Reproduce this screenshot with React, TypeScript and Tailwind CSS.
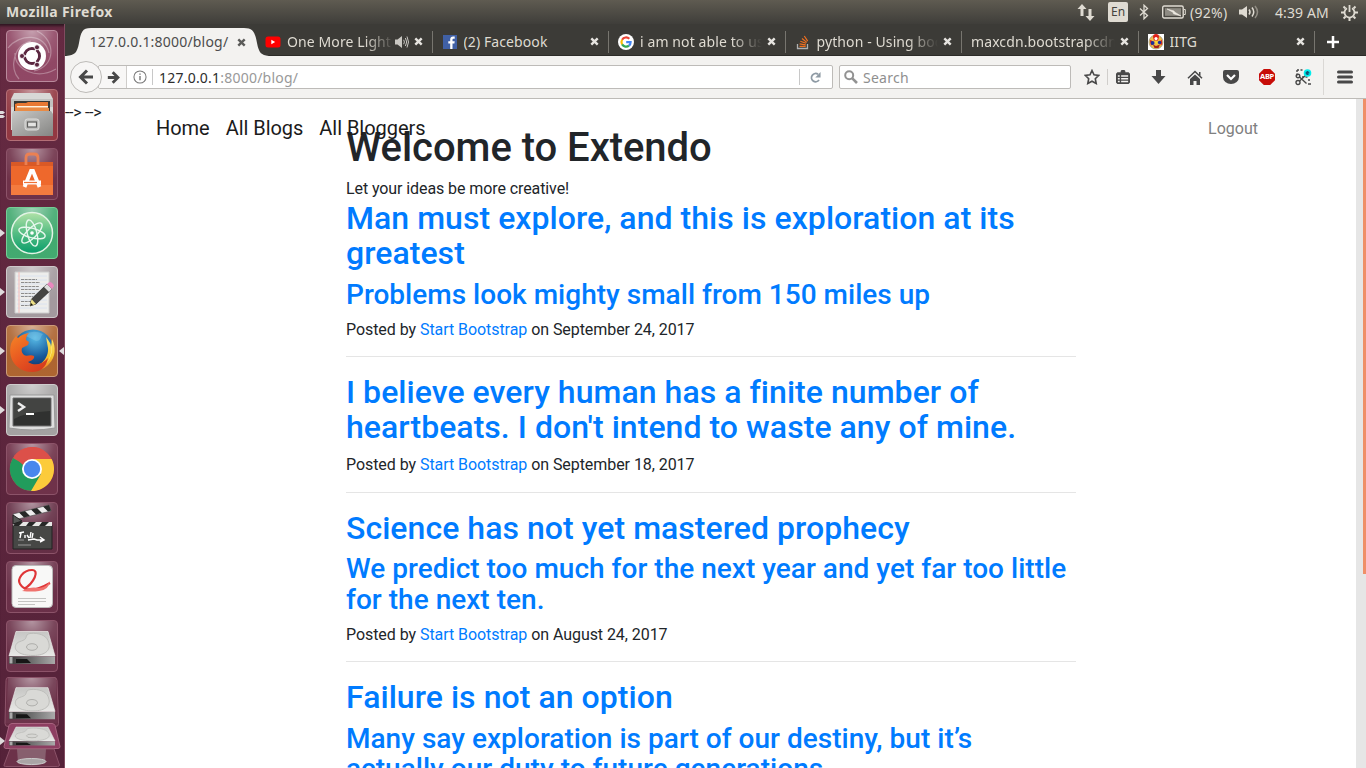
import React from "react";

const ui = "font-['Noto_Sans',sans-serif]";

function Close({ dark = false }: { dark?: boolean }) {
  return (
    <svg className="h-[9px] w-[9px] shrink-0" viewBox="0 0 9 9">
      <path d="M1.3 1.3 7.7 7.7M7.7 1.3 1.3 7.7" stroke={dark ? "#5b5b59" : "#e6e4e0"} strokeWidth="2.4" />
    </svg>
  );
}

function YouTube() {
  return (
    <svg className="h-4 w-4" viewBox="0 0 16 16">
      <rect x="0.5" y="2.5" width="15" height="11" rx="2.5" fill="#f00" />
      <path d="M6.3 5.8v4.4L10.2 8z" fill="#fff" />
    </svg>
  );
}
function Facebook() {
  return (
    <svg className="h-4 w-4" viewBox="0 0 16 16">
      <rect x="1" y="1" width="14" height="14" fill="#4060a5" />
      <path d="M8.2 15V9.4H6.3V7.2h1.9V5.6c0-2 1.1-3 2.9-3h1.6v2.1h-1.1c-.9 0-1.1.4-1.1 1.1v1.4h2.2l-.3 2.2h-1.9V15z" fill="#fff" />
    </svg>
  );
}
function Google() {
  return (
    <svg className="h-4 w-4" viewBox="0 0 16 16">
      <circle cx="8" cy="8" r="8" fill="#fff" />
      <g fill="none" strokeWidth="2.2">
        <path d="M4.1 5.7A4.6 4.6 0 0 1 11.3 4.8" stroke="#ea4335" />
        <path d="M4.1 5.7a4.6 4.6 0 0 0 0 4.7" stroke="#fbbc05" />
        <path d="M4.1 10.4a4.6 4.6 0 0 0 6.9 1.2" stroke="#34a853" />
        <path d="M11 11.6A4.6 4.6 0 0 0 12.6 8.2H8.2" stroke="#4285f4" />
      </g>
    </svg>
  );
}
function Stack() {
  return (
    <svg className="h-4 w-4" viewBox="0 0 16 16" fill="none">
      <path d="M2.5 10v4.5h10V10" stroke="#b0b0b0" strokeWidth="1.3" />
      <path d="M4.5 12.3h6.2M4.6 9.9l6.1.9M5.3 7.2l5.8 2M7 4.5l4.8 3.9M9.3 2l3.4 5.1" stroke="#ef7020" strokeWidth="1.2" />
    </svg>
  );
}
function Iitg() {
  return (
    <svg className="h-4 w-4" viewBox="0 0 16 16">
      <path d="M0 0h16v16H0z" fill="#fff" />
      <circle cx="8" cy="8" r="7" fill="#f0bd4a" stroke="#9b9582" strokeWidth=".8" />
      <path d="M5 3a3 3 0 0 1 6 0L10 6.500H6z" fill="#e02018" />
      <circle cx="8" cy="4.6" r="1.6" fill="#fff" />
      <path d="M1.800 6.500c2-1 3 1 2.6 4L3 11.5z" fill="#d82020" />
      <path d="M13.800 5.5c-2 1-2 4-1 6l1.5-1.5z" fill="#e02818" />
      <path d="M5 10.5 8 12l4-1.5-1.5 3.500h-4z" fill="#a62018" />
      <circle cx="4.6" cy="9" r="1.9" fill="#1c2e9b" />
      <circle cx="11.6" cy="8.500" r="1.8" fill="#1c2e9b" />
      <path d="M7 6.5 9.5 8 8 10.5z" fill="#ffdf27" />
    </svg>
  );
}

function Speaker() {
  return (
    <svg className="h-[14px] w-[14px]" viewBox="0 0 14 14" fill="none" stroke="#c9c7c2">
      <path d="M0 4.5h2.5L7 1v12L2.5 9.5H0z" fill="#c9c7c2" stroke="none" />
      <path d="M8.7 4.8q1.4 2.2 0 4.4M10.4 3q2.6 4 0 8M12 1.5q3 5.5 0 11" />
    </svg>
  );
}

type TabProps = { icon?: React.ReactNode; label: string; fade?: boolean; audio?: boolean };
function Tab({ icon, label, fade, audio }: TabProps) {
  return (
    <div className="flex h-full w-[176.5px] shrink-0 items-center pt-[4px] pl-[9px]">
      {icon && <span className="mr-[6px] h-4 w-4 shrink-0">{icon}</span>}
      <span
        className={`min-w-0 flex-1 overflow-hidden text-[14px] leading-5 tracking-[0.1px] whitespace-nowrap text-[#dfdbd2] ${
          fade ? "[mask-image:linear-gradient(to_right,#000_calc(100%_-_30px),transparent)]" : ""
        }`}
      >
        {label}
      </span>
      {audio && <Speaker />}
      <span className="mr-[9px] ml-[5px] flex"><Close /></span>
      <span className="h-[22px] w-px bg-[#77756f]" />
    </div>
  );
}

function TopBar() {
  return (
    <header className="flex h-6 shrink-0 items-center bg-linear-to-b from-[#5f5b51] to-[#3f3e3a] pr-[8px] pl-[6px] text-[#dfdbd2]">
      <span className="flex-1 text-[14px] leading-6 font-bold tracking-[0.35px]">Mozilla Firefox</span>
      <svg className="mr-[13px] h-[18px] w-[18px]" viewBox="0 0 18 18" fill="#dfdbd2">
        <path d="M5 1 .5 6H3.500v7h3V6H9.500zM13 18l4.500-5H14.500V6h-3v7H8.500z" />
      </svg>
      <span className="mr-[11px] flex h-5 w-5 items-center justify-center rounded-[2px] bg-[#dfdbd2] text-[12px] text-[#45433e]">En</span>
      <svg className="mr-[13px] h-4 w-[10px]" viewBox="0 0 10 16" fill="none" stroke="#dfdbd2" strokeWidth="1.3">
        <path d="m1 4.500 7.500 7L5 14.800V1.200L8.500 4.500l-7.500 7" />
      </svg>
      <svg className="mr-[4px] h-[14px] w-6" viewBox="0 0 24 14" fill="none" stroke="#dfdbd2">
        <rect x=".7" y="1" width="20.500" height="12" rx="1.500" strokeWidth="1.400" />
        <path d="M22 4.500h1.300v5H22" />
        <path d="M3 3.200h16v7.600H3z" fill="#8e8b83" stroke="none" />
        <path d="m5 4 7 2 .5 1L19 11l-7.500-2.200-.5-1.600z" fill="#eeeae2" stroke="#eeeae2" strokeWidth=".6" />
      </svg>
      <span className="mr-[10px] w-[39px] text-[14px] tracking-[0.3px] whitespace-nowrap">(92%)</span>
      <svg className="mr-[16px] h-4 w-5" viewBox="0 0 20 16" fill="none" stroke="#dfdbd2" strokeWidth="1.500">
        <path d="M0 5.500h3L8 2v12L3 10.500H0z" fill="#dfdbd2" stroke="none" />
        <path d="M10 5.500q2 2.500 0 5M13 3.500q3.500 4.500 0 9" />
        <path d="M16 2q5 6 0 12" stroke="#918d84" />
      </svg>
      <span className="mr-[11px] w-[55px] text-[14px] tracking-[0.1px] whitespace-nowrap">4:39 AM</span>
      <svg className="h-[17px] w-[17px]" viewBox="0 0 17 17" fill="none" stroke="#dfdbd2">
        <path d="M6 4.200a5 5 0 1 0 5 0" strokeWidth="1.800" />
        <path d="M8.500 1v7" strokeWidth="1.800" />
        <path d="m4.500 4.500-2-2M12.500 4.500l2-2M3 8.500H0M14 8.500h3M4.600 12.500l-2 2M12.400 12.500l2 2M8.500 14v3" strokeWidth="2" />
      </svg>
    </header>
  );
}

function Tile({ fill, edge, children }: { fill: string; edge?: string; children: React.ReactNode }) {
  return (
    <svg className="h-[52px] w-[52px] shrink-0" viewBox="0 0 52 52">
      <rect x=".5" y=".5" width="51" height="51" rx="3.500" fill={fill} stroke={edge ?? "#8c5369"} />
      <rect x="1" y="1" width="50" height="50" rx="3" fill="url(#gloss)" />
      {children}
    </svg>
  );
}

function Disk() {
  return (
    <g>
      <path d="M10 11.500h32L49 36H3z" fill="url(#plate)" stroke="#ececea" strokeWidth=".7" />
      <path d="M3 36.500h46v7.500H3z" fill="url(#slot)" />
      <path d="M3.500 37v6.500h3V37z" fill="#aaa" />
      <path d="M10 39h11l4 4H10z" fill="#161616" />
      <path d="M24 13.500c9-1 16 2 18 7 4 9-2 15-15 15-13 0-20-5-17-11 2-4 9-3 10-7 .5-2 1-3.500 4-4z" fill="#d9d9d6" stroke="#bdbdba" />
      <ellipse cx="26" cy="27" rx="5.500" ry="3.300" fill="#d6d6d3" stroke="#aeaeab" />
    </g>
  );
}

function Launcher() {
  return (
    <aside className="relative flex w-[65px] shrink-0 flex-col items-center gap-[7px] overflow-hidden border-r border-[#814b60] bg-linear-to-b from-[#662a42] to-[#552239] pt-[6px] pr-px shadow-[inset_0_4px_3px_-2px_#2d1620]">
      <svg className="absolute h-0 w-0">
        <defs>
          <radialGradient id="gloss" cx=".5" cy="0" r=".75">
            <stop stopColor="#fff" stopOpacity=".5" /><stop offset=".6" stopColor="#fff" stopOpacity=".12" /><stop offset="1" stopColor="#fff" stopOpacity=".03" />
          </radialGradient>
          <linearGradient id="slot"><stop stopColor="#3a3a3a" /><stop offset=".5" stopColor="#6e6e6e" /><stop offset="1" stopColor="#aaa" /></linearGradient>
          <linearGradient id="plate" x1="0" y1="0" x2="0" y2="1"><stop stopColor="#c6c6c4" /><stop offset="1" stopColor="#e8e8e6" /></linearGradient>
          <linearGradient id="steel" x1="0" y1="0" x2="1" y2="1"><stop stopColor="#c8c8c6" /><stop offset="1" stopColor="#858583" /></linearGradient>
          <radialGradient id="sea" cx=".55" cy=".2" r=".8"><stop stopColor="#58bce8" /><stop offset=".6" stopColor="#17599b" /><stop offset="1" stopColor="#102c61" /></radialGradient>
          <linearGradient id="fox" x1="0" y1="0" x2=".7" y2="1"><stop stopColor="#f58727" /><stop offset=".6" stopColor="#e75420" /><stop offset="1" stopColor="#d43c1f" /></linearGradient>
          <linearGradient id="flame" x1="0" y1="0" x2="0" y2="1"><stop stopColor="#fbe36a" /><stop offset=".6" stopColor="#f7c62f" /><stop offset="1" stopColor="#ee7a25" /></linearGradient>
          <linearGradient id="atom" x1="0" y1="0" x2="0" y2="1"><stop stopColor="#b1e2a8" /><stop offset=".5" stopColor="#55bd83" /><stop offset="1" stopColor="#089d6a" /></linearGradient>
        </defs>
      </svg>
      <Tile fill="#8d4260" edge="#b98a9c">
        <g fill="none" stroke="#fff" strokeOpacity=".3" strokeWidth="1.200">
          <path d="M2 18C14 3 39 3 43 23M31 1c20 10 18 36-3 40M50 39C31 50 8 40 9 23M13 49C3 39 7 15 25 11" />
        </g>
        <circle cx="26" cy="26" r="14" fill="#fff" />
        <circle cx="26" cy="26" r="7.500" fill="none" stroke="#5b2740" strokeWidth="3" />
        <path d="M26 26 30.800 34.300M26 26 30.800 17.700M26 26H16.500" stroke="#fff" strokeWidth="1.300" />
        <circle cx="26" cy="26" r="5.900" fill="#fff" />
        <g fill="#5b2740" stroke="#fff" strokeWidth=".8"><circle cx="16" cy="26" r="2.500" /><circle cx="31" cy="17.300" r="2.500" /><circle cx="31" cy="34.700" r="2.500" /></g>
      </Tile>
      <Tile fill="#8f323c" edge="#b46f77">
        <path d="M8 4h36l3 6v31H5V10z" fill="#d8d8d6" />
        <path d="M5 10h42v8H5z" fill="#c2c2c0" />
        <path d="M8 12h36v13H8z" fill="#393836" />
        <path d="M9 15l3-1h8l2-1h20v11H9z" fill="#e97833" />
        <path d="M11 17h31v1.500H11z" fill="#fff3df" />
        <path d="M10 19h33v4H10z" fill="#e98b45" />
        <path d="M7 22h38l2 3v22H6V25z" fill="url(#steel)" />
        <rect x="19" y="30" width="14" height="11" rx="2.500" fill="#bfbfbd" stroke="#dededc" />
        <rect x="21.500" y="33" width="9" height="5" fill="#e4e4e2" stroke="#60605e" strokeWidth="1.200" />
      </Tile>
      <Tile fill="#6b2c44">
        <path d="M5 14h42v33H5z" fill="#ee682c" /><path d="M5 14h42v4H5z" fill="#d95926" /><path d="M5 37h42v10H5z" fill="#f47b3f" />
        <path d="M20 17v-7q0-4 4-4h4q4 0 4 4v7" fill="none" stroke="#eb8052" strokeWidth="2.800" />
        <path d="m18.500 39 6.500-16h2L33.500 39M17 34.500h18" fill="none" stroke="#fff" strokeWidth="3.800" />
        <path d="M18 34.500h13" stroke="#f07135" strokeWidth="1.200" />
      </Tile>
      <Tile fill="#3da76c" edge="#76cd96">
        <circle cx="26" cy="26" r="20.500" fill="url(#atom)" stroke="#e2f4e5" strokeWidth="1.500" />
        <g fill="none" stroke="#e6f7ed" strokeWidth="1.400"><ellipse cx="26" cy="26" rx="13.500" ry="4.800" transform="rotate(15 26 26)" /><ellipse cx="26" cy="26" rx="13.500" ry="4.800" transform="rotate(75 26 26)" /><ellipse cx="26" cy="26" rx="13.500" ry="4.800" transform="rotate(-45 26 26)" /></g>
        <circle cx="26" cy="26" r="1.800" fill="#fff" />
      </Tile>
      <Tile fill="#a0979b" edge="#cec8ca">
        <path d="M9 6h34v41H9z" fill="#ededeb" stroke="#ccc" />
        <path d="M11 10h30M11 14h30M11 18h30M11 22h30M11 26h30M11 30h30M11 34h30M11 38h30M11 42h30" stroke="#d5dff0" strokeWidth=".8" />
        <path d="M13 6v41" stroke="#f5bbb8" /><path d="M15 13.500h16M15 16.500h19M15 20.500h18M15 23.500h18M15 27.500h14M15 30.500h12M15 35.500h10M15 39.500h8" stroke="#8c8c8c" strokeDasharray="3 .7" />
        <path d="m24 40 1.500-7L41 18l5 5-16 15z" fill="#444442" stroke="#222" strokeWidth=".7" /><path d="m24 40 1.500-7 4.500 5z" fill="#eee187" /><path d="m24 40 1-3 2 2z" fill="#111" /><path d="m38 21 3-3 5 5-3 3z" fill="#ddd" /><path d="m41 18 2.500-2q3 0 4.500 4l-2 3z" fill="#e988be" />
      </Tile>
      <Tile fill="#ab602b" edge="#cc9c7b">
        <circle cx="27" cy="25" r="20.500" fill="url(#sea)" />
        <path d="M18 10q9-6 19-1c-3 2-1 7-7 7l-6-3z" fill="#88cbe8" opacity=".4" />
        <path d="M40 12c2 3 5 6 5 10l1-8c4 8 4 18-3 25-6 7-16 8-24 4 14 1 24-9 23-20z" fill="url(#flame)" />
        <path d="M5 19c1-3 3-6 5-8l2 2c3-3 6-4 11-5-2 2-3 4-3 7l3 2-1 3-6 3c-1 3 0 5 2 7 3 2 6-1 10 1 1 3-3 5-6 6 6 4 14 3 20-4C40 43 34 47 26 47 12 47 1 35 5 19z" fill="url(#fox)" />
        <path d="M44 16q4 13-4 23 9-10 4-23z" fill="#fff6a0" />
      </Tile>
      <Tile fill="#a19f9f" edge="#cecccc">
        <path d="M4 11h44l1 33q-22 4-46 0z" fill="#dedede" stroke="#999" />
        <path d="M7 14h38v28H7z" fill="#303130" stroke="#727272" /><path d="M8 15h36v12Q20 28 8 35z" fill="#50524f" opacity=".6" />
        <path d="m12 19 6 4-6 4" fill="none" stroke="#eee" strokeWidth="2.400" /><path d="M20 30h8" stroke="#fff" strokeWidth="2" />
      </Tile>
      <Tile fill="#6b2c44">
        <circle cx="26" cy="26" r="22" fill="#dc5049" />
        <path d="M26 26 6.900 15A22 22 0 0 0 26 48l9-17z" fill="#219c5c" />
        <path d="M26 16h19.600A22 22 0 0 1 25 48l10-17z" fill="#fccb3b" />
        <path d="M8 13Q14 5 26 4t18 12H26q-7 0-9 6z" fill="#dc5049" />
        <circle cx="26" cy="26" r="10" fill="#fff" /><circle cx="26" cy="26" r="8.200" fill="#4a87ed" />
      </Tile>
      <Tile fill="#602940">
        <path d="M7 23h39v24H7z" fill="#464745" stroke="#222" /><path d="M7 20h39v4H7z" fill="#e7e7e5" />
        <path d="m7 12 36-9 2 6-37 9z" fill="#eee" stroke="#444" strokeWidth=".6" />
        <path d="m13 10.500 5 5 6-1.500-5-5zM25 7.500l5 5 6-1.500-5-5zM37 4.500l5 5 3-1-2-5.500zM10 20l-3 4h6l4-4zM23 20l-3 4h6l4-4zM36 20l-3 4h6l4-4z" fill="#272827" />
        <path d="m7 13 9 6-9 3z" fill="#565856" stroke="#222" />
        <path d="M13 31l5-1M15 31l-1 5M19 33v3M21 33l2 3M25 30l-1 6M27 31l-1 5M22 38l6-1 3 1h6M34 35l4 3-4 2" fill="none" stroke="#fff" strokeWidth="1.400" /><path d="M12 38h6M12 43h13" stroke="#999" />
      </Tile>
      <Tile fill="#662a43">
        <rect x="6" y="4.500" width="40.500" height="42" rx="4" fill="#f8f8f7" stroke="#bbb" />
        <path d="M18 28C28 22 34 9 26 9c-9 0-15 9-12 14 5 8 16 7 30-1" fill="none" stroke="#df3637" strokeWidth="2.200" />
        <path d="M16 30c7-4 12-4 17-3q8-1 11-7-1 9-11 10-7 1-17 0z" fill="#f0736e" />
        <path d="M12 37.500h28M12 40.500h28M12 43.500h17" stroke="#c4c4c2" />
      </Tile>
      <Tile fill="#682d45"><Disk /></Tile>
      <svg className="absolute bottom-0 left-0 h-[95px] w-[64px]" viewBox="0 0 64 95">
        <path d="M8 4.500h47q1.500 0 2 3l1.500 43q0 3-3 3H8q-3 0-3-3L6 7.500q0-3 2-3z" fill="#682d45" stroke="#8c5369" /><path d="M8 5h48l1 45H6z" fill="url(#gloss)" />
        <g transform="translate(6 3.500) scale(1 .97)"><Disk /></g>
        <path d="M12 50.500h40q2 0 3 2l5 21q0 2-2 2H6q-2 0-2-2l5-21q1-2 3-2z" fill="#8d3e61" stroke="#a8637f" />
        <g transform="translate(6 47.500) scale(1 .57)"><Disk /></g>
        <path d="M10 76h44l5.500 16q0 1.500-2 1.500h-52q-2 0-1.500-1.500z" fill="#6c3249" stroke="#8c5369" />
        <path d="M17 76h29l-1 14q-13 5-27 0z" fill="#8e6a78" opacity=".8" /><ellipse cx="31.500" cy="88.500" rx="14.500" ry="3" fill="#aaa5a6" stroke="#ccc" />
      </svg>
      <svg className="absolute inset-0 h-full w-[64px]" viewBox="0 0 64 744" fill="#dfdbdc">
        <path d="M0 87h3l2 1.500-2 1.500H0zM0 91h3l2 1.500-2 1.500H0zM0 205l5 4-5 4zM0 264l5 4-5 4zM0 323l5 4-5 4zM0 382l5 4-5 4zM0 713l5 4-5 4zM64 323l-5 4 5 4z" />
      </svg>
    </aside>
  );
}

function TabStrip() {
  return (
    <div className="flex h-8 shrink-0 border-b border-[#2c2b28] bg-[#3c3b37]">
      <div className="relative z-10 h-8 w-[191px] shrink-0">
        <svg className="absolute top-0 left-0 h-8 w-[204px]" viewBox="0 0 204 32">
          <path d="M1 32C10 31 12 29 14 19 16 8 17 4 26 4H179C188 4 190 8 192 19 194 29 196 31 204 32z" fill="#f3f2f0" />
        </svg>
        <div className="relative flex h-full items-center pt-[4px] pl-[24.5px]">
          <span className="w-[147px] text-[14px] leading-5 tracking-[0.2px] whitespace-nowrap text-[#4c4c4c]">127.0.0.1:8000/blog/</span>
          <Close dark />
        </div>
      </div>
      <Tab icon={<YouTube />} label="One More Light" fade audio />
      <Tab icon={<Facebook />} label="(2) Facebook" />
      <Tab icon={<Google />} label="i am not able to use" fade />
      <Tab icon={<Stack />} label="python - Using boot" fade />
      <Tab label="maxcdn.bootstrapcdn" fade />
      <Tab icon={<Iitg />} label="IITG" />
      <svg className="mt-[11px] ml-[11px] h-[14px] w-[14px]" viewBox="0 0 14 14"><path d="M7 1v12M1 7h12" stroke="#fff" strokeWidth="2.500" /></svg>
    </div>
  );
}

function Toolbar() {
  return (
    <div className="flex h-[43px] shrink-0 items-center border-b border-[#bdbbb7] bg-[#f3f2f0] pl-[5px]">
      <span className="z-10 flex h-8 w-8 shrink-0 items-center justify-center rounded-full border border-[#bdbbb8] bg-[#f7f6f5]">
        <svg className="h-4 w-4" viewBox="0 0 16 16" fill="none" stroke="#484848" strokeWidth="3"><path d="M15 8H3M9 1.500 2.500 8 9 14.500" /></svg>
      </span>
      <div className="-ml-[4px] flex h-6 w-[735px] shrink-0 items-center rounded-[2px] border border-[#bdbbb8] bg-white">
        <span className="flex h-full w-[28px] items-center justify-center border-r border-[#cfcdca] bg-[#f8f7f6]">
          <svg className="ml-[2px] h-[13px] w-[13px]" viewBox="0 0 16 16" fill="none" stroke="#484848" strokeWidth="3.400"><path d="M1 8h12M7 1.500 13.500 8 7 14.500" /></svg>
        </span>
        <svg className="ml-[6px] h-[14px] w-[14px]" viewBox="0 0 15 15" fill="none" stroke="#777"><circle cx="7.500" cy="7.500" r="6.500" strokeWidth="1.100" /><path d="M7.500 6.500V11M7.500 3.700v1.500" strokeWidth="1.500" /></svg>
        <span className="ml-[5px] h-4 w-px bg-[#c8c8c8]" />
        <span className="ml-[6px] flex-1 pt-px text-[14px] leading-5 tracking-[0.22px] text-[#999]"><span className="text-[#2d2d2d]">127.0.0.1</span>:8000/blog/</span>
        <span className="h-4 w-px bg-[#c8c8c8]" />
        <svg className="mr-[11px] ml-[10px] h-[11px] w-[11px]" viewBox="0 0 12 12"><path d="M9.800 8.800A4.500 4.500 0 1 1 8.800 2.500" fill="none" stroke="#8e9aa4" strokeWidth="2" /><path d="M11.500 0v6H5.800z" fill="#8e9aa4" /></svg>
      </div>
      <div className="ml-[6px] flex h-6 w-[232px] shrink-0 items-center rounded-[2px] border border-[#bdbbb8] bg-white pl-[4px]">
        <svg className="h-[14px] w-[14px]" viewBox="0 0 14 14" fill="none" stroke="#929292"><circle cx="5.200" cy="5.200" r="4" strokeWidth="2" /><path d="m8.300 8.300 4.700 4.700" strokeWidth="2.600" /></svg>
        <span className="ml-[5px] pt-px text-[14px] leading-5 tracking-[0.25px] text-[#8f8f8f]">Search</span>
      </div>
      <div className="ml-[13px] flex h-full items-center">
        <svg className="h-4 w-4" viewBox="0 0 16 16" fill="none" stroke="#484848" strokeWidth="1.600"><path d="m8 1.500 2 4.300 4.800.6-3.500 3.300.9 4.800L8 12.200l-4.200 2.300.9-4.800L1.200 6.400 6 5.800z" /></svg>
        <span className="mr-[8px] ml-[7px] h-4 w-px bg-[#d0cecb]" />
        <svg className="mr-[21px] h-4 w-[14px]" viewBox="0 0 15 16"><path d="M5 3V1.500L6 .5h3l1 1V3h3.500l1.500 1.500V14l-1.500 1.500h-12L0 14V4.500L1.500 3z" fill="#484848" /><path d="M2 6h2v1.600H2zm3.500 0H13v1.600H5.500zM2 9h2v1.600H2zm3.500 0H13v1.600H5.500zM2 12h2v1.500H2zm3.500 0H13v1.500H5.500z" fill="#f3f2f0" /></svg>
        <svg className="mr-[21px] h-[15px] w-[15px]" viewBox="0 0 15 15"><path d="M5 0h5v6h4.500l-7 8L.5 6H5z" fill="#484848" /></svg>
        <svg className="mr-[20px] h-[15px] w-4" viewBox="0 0 16 15" fill="#484848"><path d="m8 4.500 5 4.600V15H9.500v-4h-3v4H3V9.100z" /><path d="M1 8.300 8 1.500l7 6.800" fill="none" stroke="#484848" strokeWidth="1.500" /><path d="M12 2h1.500v4L12 4.500z" /></svg>
        <svg className="mr-[20px] h-[15px] w-4" viewBox="0 0 16 15"><path d="M2 0h12q2 0 2 2v5a8 7 0 0 1-16 0V2q0-2 2-2z" fill="#484848" /><path d="m4 5 4 4 4-4" fill="none" stroke="#fff" strokeWidth="2.200" /></svg>
        <span className="mr-[20px] flex h-4 w-4 items-center justify-center bg-[#c70d08] text-[7.500px] font-bold tracking-[-0.300px] text-white [clip-path:polygon(30%_0,70%_0,100%_30%,100%_70%,70%_100%,30%_100%,0_70%,0_30%)]">ABP</span>
        <svg className="h-[17px] w-[17px]" viewBox="0 0 17 17" fill="none" stroke="#484848" strokeWidth="1.400"><path d="M2 1h6M2 1v7M7 8h7" strokeDasharray="2 1.500" /><circle cx="3" cy="7" r="1.800" /><circle cx="3" cy="13.500" r="2" /><path d="m4.500 8 7 6.500M4.500 12 11 6M13 11h2M13 15h3" /><circle cx="12.500" cy="4" r="3.800" fill="#0ee" stroke="none" /><path d="M12.500 2v4M10.700 3l3.600 2M14.300 3l-3.600 2" stroke="#157" /></svg>
        <span className="mr-[13px] ml-[11px] h-9 w-px bg-[#dad8d5]" />
        <svg className="h-[14px] w-4" viewBox="0 0 16 14"><path d="M1.500 2h13M1.500 7h13M1.500 12h13" stroke="#484848" strokeWidth="3" strokeLinecap="round" /></svg>
      </div>
    </div>
  );
}

type PostData = { title: string; sub?: string; date: string };
const posts: PostData[] = [
  { title: "Man must explore, and this is exploration at its greatest", sub: "Problems look mighty small from 150 miles up", date: "September 24, 2017" },
  { title: "I believe every human has a finite number of heartbeats. I don't intend to waste any of mine.", date: "September 18, 2017" },
  { title: "Science has not yet mastered prophecy", sub: "We predict too much for the next year and yet far too little for the next ten.", date: "August 24, 2017" },
  { title: "Failure is not an option", sub: "Many say exploration is part of our destiny, but it’s actually our duty to future generations.", date: "July 8, 2017" },
];

function Blog() {
  return (
    <main className="relative min-h-0 flex-1 overflow-hidden bg-white font-[Roboto,sans-serif] text-[16px] leading-6 text-[#212529]">
      <div className="h-[26.1px] pt-[1.500px] tracking-[-0.300px]">--&gt; --&gt;</div>
      <nav className="absolute top-[13px] right-[108px] left-[91px] z-10 flex items-center text-[20px] leading-[30px] tracking-[-0.04px] text-[#1b1b1b]">
        <a className="mr-4">Home</a><a className="mr-4">All Blogs</a><a>All Bloggers</a>
        <a className="ml-auto pt-[2px] text-[16px] leading-[30px] tracking-normal text-[#808080]">Logout</a>
      </nav>
      <div className="ml-[281px] w-[730px]">
        <h1 className="mb-[7px] pt-px text-[40px] leading-[44px] font-medium tracking-[-0.04px]">Welcome to Extendo</h1>
        <p className="tracking-[-0.09px]">Let your ideas be more creative!</p>
        {posts.map((p) => (
          <article key={p.title}>
            <h2 className="mb-2 text-[32px] leading-[35.2px] font-medium tracking-[0.045px] text-[#007bff]">{p.title}</h2>
            {p.sub && <h3 className="mb-2 text-[28px] leading-[30.8px] font-medium tracking-[0.02px] text-[#007bff]">{p.sub}</h3>}
            <p className="-mt-[0.3px] tracking-[-0.06px]">Posted by <a className="text-[#007bff]">Start Bootstrap</a> on {p.date}</p>
            <hr className="mt-[14.2px] mb-[18.1px] border-t border-[#e5e5e5]" />
          </article>
        ))}
      </div>
      <div className="absolute top-0 right-0 flex h-full w-[10px] justify-end bg-[#e6e6e6]"><div className="h-[475px] w-[3px] bg-[#ef8f68]" /></div>
    </main>
  );
}

export default function App() {
  return (
    <div className={`flex h-[768px] w-[1366px] flex-col overflow-hidden ${ui}`}>
      <TopBar />
      <div className="flex min-h-0 flex-1">
        <Launcher />
        <div className="flex min-w-0 flex-1 flex-col"><TabStrip /><Toolbar /><Blog /></div>
      </div>
    </div>
  );
}
